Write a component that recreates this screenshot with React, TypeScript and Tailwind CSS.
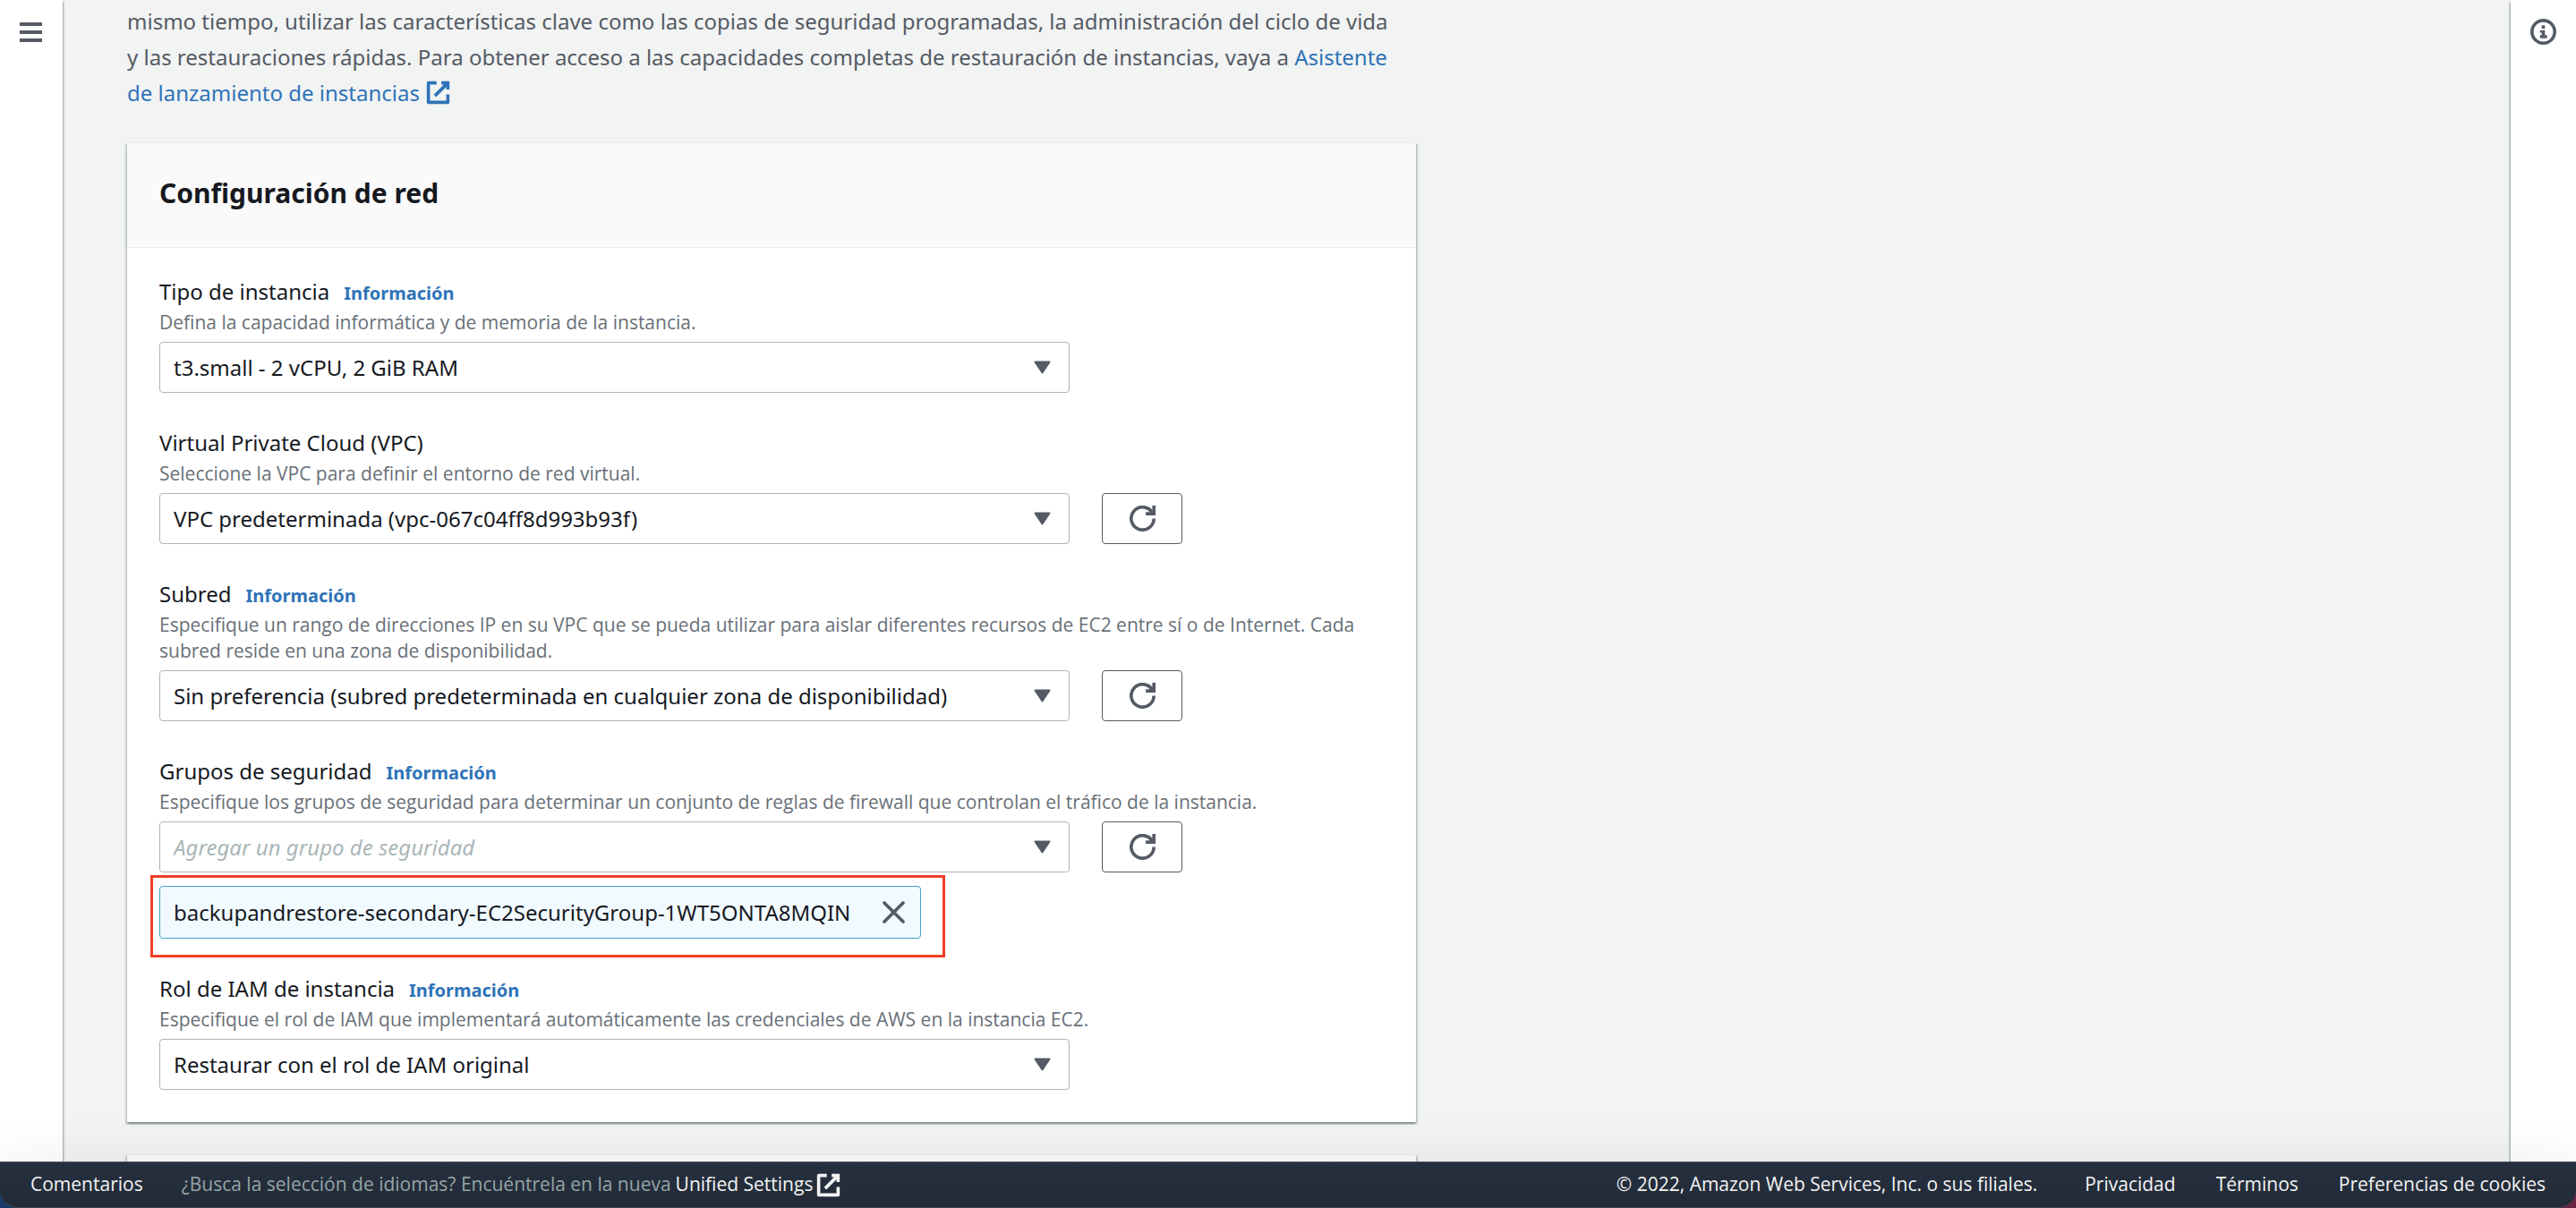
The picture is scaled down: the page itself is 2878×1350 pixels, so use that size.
import React from 'react';

const CARD_SHADOW =
  'shadow-[0_2px_2px_rgba(0,28,36,0.3),2px_2px_2px_rgba(0,28,36,0.15),-2px_2px_2px_rgba(0,28,36,0.15)]';

function ExternalIcon({ className }: { className: string }) {
  return (
    <svg viewBox="0 0 16 16" className={className} fill="none" stroke="currentColor" strokeWidth="2" strokeLinejoin="round" aria-hidden="true">
      <path d="M10 2h4v4" strokeLinejoin="miter" />
      <path d="M6 10l8-8" />
      <path d="M14 9.05V14H2V2h5.04" />
    </svg>
  );
}

function RefreshButton({ label }: { label: string }) {
  return (
    <button
      type="button"
      aria-label={label}
      className="flex h-[57px] w-[90px] items-center justify-center rounded-[4px] border border-[#545b64] bg-white text-[#545b64]"
    >
      <svg viewBox="0 0 16 16" className="h-[29px] w-[29px]" fill="none" stroke="currentColor" strokeWidth="2" aria-hidden="true">
        <path d="M10 5h5V0" />
        <path d="M15 8a7 7 0 1 1-.7-3.1" />
      </svg>
    </button>
  );
}

type FieldProps = {
  id: string;
  label: string;
  description: string;
  value: string;
  info?: boolean;
  refresh?: boolean;
  placeholder?: boolean;
  children?: React.ReactNode;
};

function Field({ id, label, description, value, info, refresh, placeholder, children }: FieldProps) {
  return (
    <div>
      <div className="flex items-baseline gap-4 leading-[40px]">
        <label htmlFor={id}>{label}</label>
        {info && (
          <a href="#info" className="text-[20px] leading-[28px] font-bold text-[#2e73b8]">
            Información
          </a>
        )}
      </div>
      <p id={`${id}-desc`} className="mb-[7px] font-['Open_Sans',sans-serif] text-[21px] leading-[29px] text-[#687078]">
        {description}
      </p>
      <div className="grid grid-cols-12 gap-9">
        <div className="relative col-span-9">
          <select
            id={id}
            aria-describedby={`${id}-desc`}
            className={
              placeholder
                ? 'block h-[57px] w-full appearance-none rounded-[4px] border border-[#aab7b8] bg-white px-[15px] italic text-[#aab7b8]'
                : 'block h-[57px] w-full appearance-none rounded-[4px] border border-[#aab7b8] bg-white px-[15px] text-[#16191f]'
            }
          >
            <option>{value}</option>
          </select>
          <svg viewBox="0 0 19 15" className="pointer-events-none absolute top-[21px] right-[21px] h-[15px] w-[19px]" aria-hidden="true">
            <path d="M1.5 1.5h16l-8 12z" fill="#545b64" stroke="#545b64" strokeWidth="2" strokeLinejoin="round" />
          </svg>
        </div>
        {refresh && <RefreshButton label={`Actualizar ${label}`} />}
      </div>
      {children}
    </div>
  );
}

function SecurityGroupToken({ name }: { name: string }) {
  return (
    <div className="mt-[15px] flex">
      <div className="relative">
        <div className="flex h-[59px] min-w-[851px] items-center justify-between gap-3 rounded-[4px] border border-[#44a0c9] bg-[#f1faff] px-[15px]">
          <span>{name}</span>
          <button type="button" aria-label={`Quitar ${name}`} className="text-[#545b64]">
            <svg viewBox="0 0 16 16" className="block h-[29px] w-[29px]" fill="none" stroke="currentColor" strokeWidth="2" strokeLinecap="round" aria-hidden="true">
              <path d="M2.2 2.2l11.6 11.6M13.8 2.2L2.2 13.8" />
            </svg>
          </button>
        </div>
        <div className="pointer-events-none absolute -top-3 -right-[27px] -bottom-[21px] -left-[10px] border-3 border-[#f03e26]" />
      </div>
    </div>
  );
}

function NetworkCard() {
  return (
    <section className={`mt-[35px] border-t border-[#eaeded] bg-white ${CARD_SHADOW}`}>
      <header className="border-b border-[#eaeded] bg-[#fafafa] px-9 pt-9 pb-10">
        <h2 className="text-[30px] leading-[40px] font-bold">Configuración de red</h2>
      </header>
      <form className="flex flex-col gap-9 px-9 pt-[29px] pb-9">
        <Field
          id="tipo"
          label="Tipo de instancia"
          info
          description="Defina la capacidad informática y de memoria de la instancia."
          value="t3.small - 2 vCPU, 2 GiB RAM"
        />
        <Field
          id="vpc"
          label="Virtual Private Cloud (VPC)"
          description="Seleccione la VPC para definir el entorno de red virtual."
          value="VPC predeterminada (vpc-067c04ff8d993b93f)"
          refresh
        />
        <Field
          id="subred"
          label="Subred"
          info
          description="Especifique un rango de direcciones IP en su VPC que se pueda utilizar para aislar diferentes recursos de EC2 entre sí o de Internet. Cada subred reside en una zona de disponibilidad."
          value="Sin preferencia (subred predeterminada en cualquier zona de disponibilidad)"
          refresh
        />
        <Field
          id="grupos"
          label="Grupos de seguridad"
          info
          description="Especifique los grupos de seguridad para determinar un conjunto de reglas de firewall que controlan el tráfico de la instancia."
          value="Agregar un grupo de seguridad"
          placeholder
          refresh
        >
          <SecurityGroupToken name="backupandrestore-secondary-EC2SecurityGroup-1WT5ONTA8MQIN" />
        </Field>
        <Field
          id="rol"
          label="Rol de IAM de instancia"
          info
          description="Especifique el rol de IAM que implementará automáticamente las credenciales de AWS en la instancia EC2."
          value="Restaurar con el rol de IAM original"
        />
      </form>
    </section>
  );
}

function Footer() {
  return (
    <div className="relative z-20 bg-linear-to-r from-[#1b3a68] to-[#6b2440] shadow-[0_0_60px_rgba(0,0,0,0.08)]">
      <footer className="flex h-[52px] items-center justify-between rounded-b-[20px] border-t border-b border-t-[#555d69] border-b-[#3d444f] bg-linear-to-b from-[#252f3e] to-[#232b37] px-[34px] font-['Open_Sans',sans-serif] text-[21px] text-[#f2f3f3]">
        <div className="flex items-center gap-[43px]">
          <a href="#comentarios">Comentarios</a>
          <p className="flex items-center text-[#95a5a6]">
            <span className="mr-[5px]">¿Busca la selección de idiomas? Encuéntrela en la nueva</span>
            <a href="#settings" className="flex items-center gap-[3px] text-[#f2f3f3]">
              Unified Settings
              <ExternalIcon className="h-[29px] w-[29px]" />
            </a>
          </p>
        </div>
        <div className="flex items-center gap-[45px]">
          <span className="mr-[8px]">© 2022, Amazon Web Services, Inc. o sus filiales.</span>
          <a href="#privacidad">Privacidad</a>
          <a href="#terminos">Términos</a>
          <a href="#cookies">Preferencias de cookies</a>
        </div>
      </footer>
    </div>
  );
}

export default function App() {
  return (
    <div className="flex h-screen flex-col overflow-hidden bg-[#f2f3f3] font-['Noto_Sans',sans-serif] text-[24px] text-[#16191f]">
      <div className="flex min-h-0 flex-1">
        <nav className="z-10 w-[70px] shrink-0 bg-white pt-[21px] pl-5 shadow-[1px_2px_2px_rgba(0,28,36,0.4)]">
          <button type="button" aria-label="Abrir navegación" className="block text-[#545b64]">
            <svg viewBox="0 0 29 29" className="block h-[29px] w-[29px]" stroke="currentColor" strokeWidth="4" aria-hidden="true">
              <path d="M2 6h25M2 15h25M2 24h25" />
            </svg>
          </button>
        </nav>
        <main className="min-w-0 flex-1 overflow-hidden pt-1 pl-[72px]">
          <div className="max-w-[1440px]">
            <p className="leading-[40px] text-[#545b64]">
              mismo tiempo, utilizar las características clave como las copias de seguridad programadas, la administración del ciclo de vida
              <br />
              y las restauraciones rápidas. Para obtener acceso a las capacidades completas de restauración de instancias, vaya a{' '}
              <a href="#asistente" className="text-[#2e73b8]">
                Asistente
                <br />
                de lanzamiento de instancias
                <ExternalIcon className="ml-[6px] inline h-[29px] w-[29px] align-[-5px]" />
              </a>
            </p>
            <NetworkCard />
            <section className={`mt-9 h-40 border-t border-[#eaeded] bg-[#fafafa] ${CARD_SHADOW}`} />
          </div>
        </main>
        <aside className="z-10 w-[73px] shrink-0 bg-white pt-[21px] pl-[22px] shadow-[-1px_2px_2px_rgba(0,28,36,0.4)]">
          <button type="button" aria-label="Abrir panel de ayuda" className="block text-[#545b64]">
            <svg viewBox="0 0 16 16" className="block h-[29px] w-[29px]" aria-hidden="true">
              <circle cx="8" cy="8" r="7" fill="none" stroke="currentColor" strokeWidth="2" />
              <path fill="currentColor" d="M7 4h2v2H7zM6 7h3v3h1.3v2H6v-2h1V8.6H6z" />
            </svg>
          </button>
        </aside>
      </div>
      <Footer />
    </div>
  );
}
